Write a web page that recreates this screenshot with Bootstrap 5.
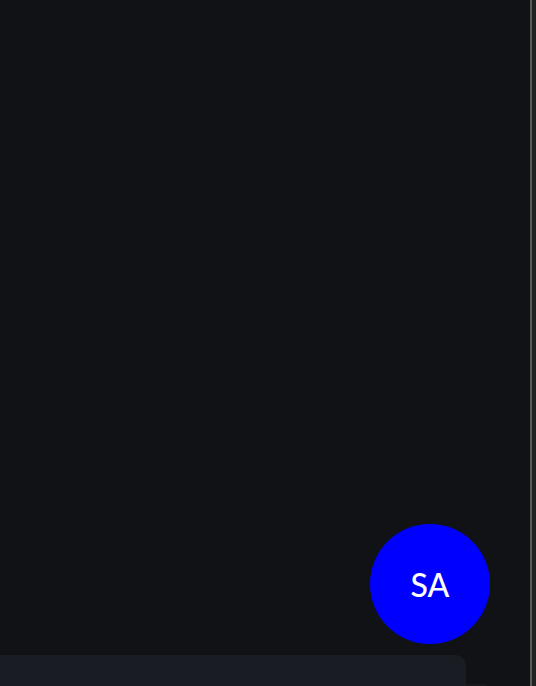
<!DOCTYPE html>
<html lang="en" data-bs-theme="dark">
<head>
<meta charset="utf-8">
<meta name="viewport" content="width=device-width, initial-scale=1">
<title>Profile</title>
<link href="https://cdn.jsdelivr.net/npm/bootstrap@5.3.0/dist/css/bootstrap.min.css" rel="stylesheet">
<style>
body { background: #202222; font-family: Lato, "Open Sans", sans-serif; }
.page-shell { padding-right: 4px; }
.page-main { background: #111215; border-right: 2px solid #5b5b5b; }
.avatar { width: 120px; height: 120px; margin: 0 40px 11px 0; padding-top: 2px; background: #0000ff; color: #fff; font-size: 32px; font-weight: 500; line-height: 40px; }
.panel-row { padding-right: 44px; }
.panel-front { height: 31px; background: #191d23; border-top-right-radius: 10px; }
.panel-back { width: 20px; height: 2px; background: #15181c; border-top-right-radius: 2px; }
</style>
</head>
<body>
<div class="page-shell d-flex min-vh-100">
  <main class="page-main flex-grow-1 d-flex flex-column justify-content-end">
    <div class="avatar rounded-circle d-flex align-items-center justify-content-center align-self-end">SA</div>
    <div class="panel-row d-flex align-items-end">
      <div class="panel-front flex-grow-1"></div>
      <div class="panel-back"></div>
    </div>
  </main>
</div>
<script src="https://cdn.jsdelivr.net/npm/bootstrap@5.3.0/dist/js/bootstrap.bundle.min.js"></script>
</body>
</html>
